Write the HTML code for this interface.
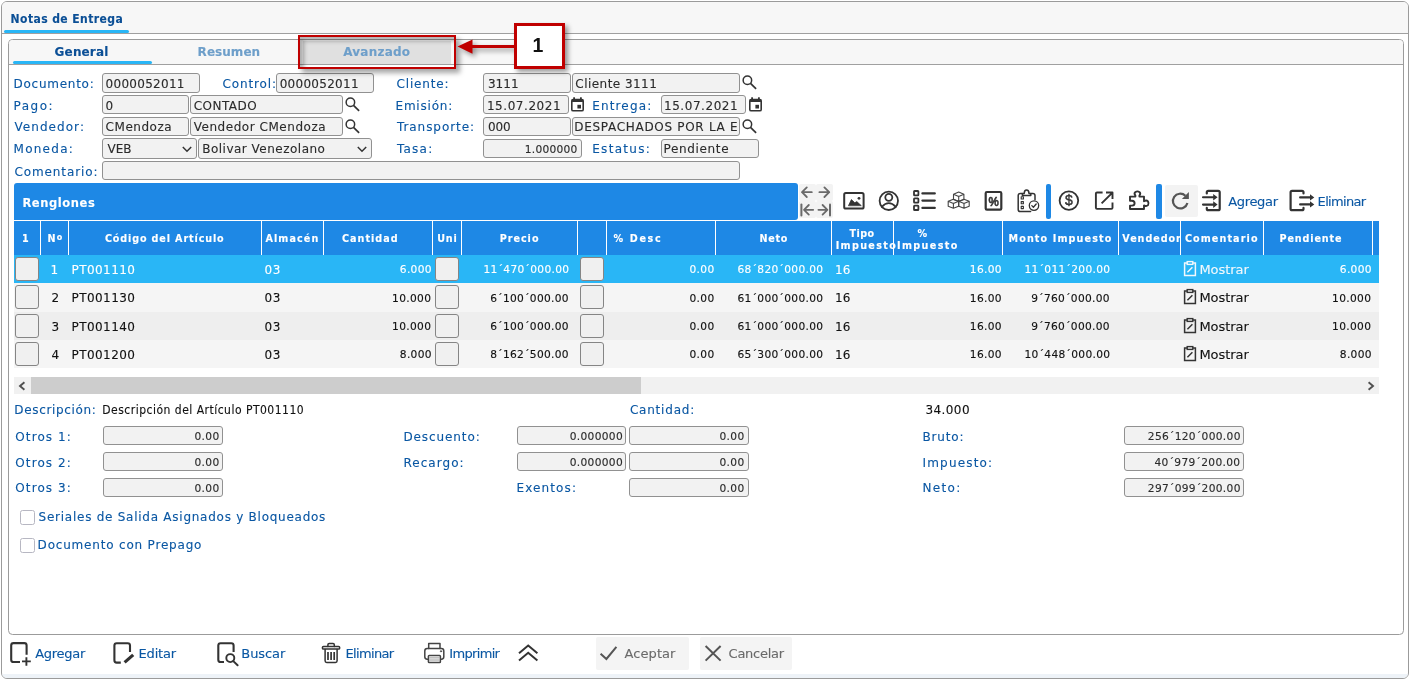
<!DOCTYPE html>
<html lang="es"><head><meta charset="utf-8"><title>Notas de Entrega</title>
<style>
*{box-sizing:border-box}
html,body{margin:0;padding:0}
body{width:1410px;height:680px;position:relative;overflow:hidden;background:#fff;font-family:"DejaVu Sans","Liberation Sans",sans-serif;font-size:12px;color:#222}
div,svg{position:absolute}
.t{white-space:nowrap;-webkit-text-stroke:0.120px currentColor}
.inp{background:#f2f2f2;border:1px solid #919191;border-radius:3px}
.sep{background:#fff;width:1px;top:221px;height:34px}
.btn{background:#f0f0f0;border:1px solid #858585;border-radius:3px}
.row{left:14px;width:1365px}
.clipx{overflow:hidden}
</style></head>
<body>
<div id="app" style="left:0;top:0;width:1410px;height:680px;will-change:transform">
<div style="left:1px;top:1px;width:1408px;height:678px;border:1px solid #9b9b9b;border-radius:6px;background:#fff;overflow:hidden"><div style="left:0;top:0;width:1406px;height:31px;background:#f7f7f7"></div><div style="left:0;top:31px;width:1406px;height:1px;background:#a0a0a0"></div><div style="left:0;top:672px;width:1406px;height:4px;background:#eef3f8"></div></div>
<div class="t" style="top:12px;font-size:12px;line-height:14px;height:14px;color:#0b4f96;font-weight:bold;font-family:'DejaVu Sans Condensed','DejaVu Sans',sans-serif;letter-spacing:0.42px;left:10.6px;">Notas de Entrega</div>
<div style="left:4px;top:30px;width:125px;height:3px;background:#29b6f6;border-radius:2px"></div>
<div style="left:8px;top:39px;width:1396px;height:596px;border:1px solid #9b9b9b;border-radius:4.500px;background:#fff;overflow:hidden"><div style="left:0;top:0;width:1395px;height:24px;background:#f7f7f7"></div><div style="left:294px;top:1px;width:148px;height:23px;background:#e0e0e0"></div><div style="left:0;top:24px;width:1395px;height:1px;background:#a0a0a0"></div></div>
<div class="t" style="top:45px;font-size:12px;line-height:14px;height:14px;color:#0b4f96;font-weight:bold;letter-spacing:0.152px;left:54.6px;">General</div>
<div class="t" style="top:45px;font-size:12px;line-height:14px;height:14px;color:#6e9fca;font-weight:bold;letter-spacing:0.049px;left:197.6px;">Resumen</div>
<div class="t" style="top:45px;font-size:12px;line-height:14px;height:14px;color:#6e9fca;font-weight:bold;letter-spacing:0.229px;left:343.2px;">Avanzado</div>
<div style="left:13px;top:61px;width:139px;height:3px;background:#29b6f6;border-radius:2px"></div>
<div class="t" style="top:76.7px;font-size:12px;line-height:14px;height:14px;color:#0a57a3;letter-spacing:0.743px;left:13.5px;">Documento:</div>
<div class="inp" style="left:102px;top:73px;width:98px;height:20px;"></div>
<div class="t" style="top:76.7px;font-size:12px;line-height:14px;height:14px;color:#2b2b2b;letter-spacing:0.276px;left:105.6px;">0000052011</div>
<div class="t" style="top:76.7px;font-size:12px;line-height:14px;height:14px;color:#0a57a3;letter-spacing:0.86px;left:222.6px;">Control:</div>
<div class="inp" style="left:276px;top:73px;width:98px;height:20px;"></div>
<div class="t" style="top:76.7px;font-size:12px;line-height:14px;height:14px;color:#2b2b2b;letter-spacing:0.276px;left:279.7px;">0000052011</div>
<div class="t" style="top:76.7px;font-size:12px;line-height:14px;height:14px;color:#0a57a3;letter-spacing:0.84px;left:396.5px;">Cliente:</div>
<div class="inp" style="left:483px;top:73px;width:88px;height:20px;"></div>
<div class="t" style="top:76.7px;font-size:12px;line-height:14px;height:14px;color:#2b2b2b;letter-spacing:0.099px;left:487.9px;">3111</div>
<div class="inp" style="left:572px;top:73px;width:168px;height:20px;"></div>
<div class="t" style="top:76.7px;font-size:12px;line-height:14px;height:14px;color:#2b2b2b;letter-spacing:0.46px;left:575.3px;">Cliente 3111</div>
<div class="t" style="top:98.5px;font-size:12px;line-height:14px;height:14px;color:#0a57a3;letter-spacing:1.523px;left:13.5px;">Pago:</div>
<div class="inp" style="left:102px;top:95px;width:87px;height:19px;"></div>
<div class="t" style="top:98.5px;font-size:12px;line-height:14px;height:14px;color:#2b2b2b;left:105.6px;">0</div>
<div class="inp" style="left:190px;top:95px;width:153px;height:19px;"></div>
<div class="t" style="top:98.5px;font-size:12px;line-height:14px;height:14px;color:#2b2b2b;letter-spacing:0.475px;left:193.7px;">CONTADO</div>
<div class="t" style="top:98.5px;font-size:12px;line-height:14px;height:14px;color:#0a57a3;letter-spacing:0.794px;left:395.5px;">Emisión:</div>
<div class="inp" style="left:483px;top:95px;width:86px;height:19px;"></div>
<div class="t" style="top:98.5px;font-size:12px;line-height:14px;height:14px;color:#2b2b2b;letter-spacing:0.559px;left:486.9px;">15.07.2021</div>
<div class="t" style="top:98.5px;font-size:12px;line-height:14px;height:14px;color:#0a57a3;letter-spacing:1.155px;left:592.2px;">Entrega:</div>
<div class="inp" style="left:661px;top:95px;width:85px;height:19px;"></div>
<div class="t" style="top:98.5px;font-size:12px;line-height:14px;height:14px;color:#2b2b2b;letter-spacing:0.548px;left:664px;">15.07.2021</div>
<div class="t" style="top:120px;font-size:12px;line-height:14px;height:14px;color:#0a57a3;letter-spacing:1.057px;left:14.5px;">Vendedor:</div>
<div class="inp" style="left:102px;top:117px;width:87px;height:19px;"></div>
<div class="t" style="top:120px;font-size:12px;line-height:14px;height:14px;color:#2b2b2b;letter-spacing:0.532px;left:105.6px;">CMendoza</div>
<div class="inp" style="left:190px;top:117px;width:153px;height:19px;"></div>
<div class="t" style="top:120px;font-size:12px;line-height:14px;height:14px;color:#2b2b2b;letter-spacing:0.541px;left:193.7px;">Vendedor CMendoza</div>
<div class="t" style="top:120px;font-size:12px;line-height:14px;height:14px;color:#0a57a3;letter-spacing:0.951px;left:396.9px;">Transporte:</div>
<div class="inp" style="left:483px;top:117px;width:88px;height:19px;"></div>
<div class="t" style="top:120px;font-size:12px;line-height:14px;height:14px;color:#2b2b2b;letter-spacing:-0.085px;left:487.9px;">000</div>
<div class="inp" style="left:572px;top:117px;width:168px;height:19px;"></div>
<div class="clipx" style="left:573px;top:118px;width:165px;height:17px">
<div class="t" style="top:2px;font-size:12px;line-height:14px;height:14px;color:#2b2b2b;letter-spacing:0.697px;left:1.3px;">DESPACHADOS POR LA EMPRESA</div>
</div>
<div class="t" style="top:141.8px;font-size:12px;line-height:14px;height:14px;color:#0a57a3;letter-spacing:1.274px;left:13.5px;">Moneda:</div>
<div class="inp" style="left:102px;top:138px;width:95px;height:21px;"></div>
<div class="t" style="top:141.8px;font-size:12px;line-height:14px;height:14px;color:#2b2b2b;letter-spacing:0.054px;left:107.4px;">VEB</div>
<div class="inp" style="left:198px;top:138px;width:174px;height:21px;"></div>
<div class="t" style="top:141.8px;font-size:12px;line-height:14px;height:14px;color:#2b2b2b;letter-spacing:0.493px;left:202.2px;">Bolivar Venezolano</div>
<div class="t" style="top:141.8px;font-size:12px;line-height:14px;height:14px;color:#0a57a3;letter-spacing:1.249px;left:396.9px;">Tasa:</div>
<div class="inp" style="left:483px;top:139px;width:99px;height:19px;"></div>
<div class="t" style="top:143.8px;font-size:9.6px;line-height:11px;height:11px;color:#2b2b2b;letter-spacing:0.208px;right:832.25px;transform:scaleX(1.11);transform-origin:right center;">1.000000</div>
<div class="t" style="top:141.8px;font-size:12px;line-height:14px;height:14px;color:#0a57a3;letter-spacing:1.306px;left:592.2px;">Estatus:</div>
<div class="inp" style="left:661px;top:139px;width:98px;height:19px;"></div>
<div class="t" style="top:141.8px;font-size:12px;line-height:14px;height:14px;color:#2b2b2b;letter-spacing:0.645px;left:663.6px;">Pendiente</div>
<div class="t" style="top:164.6px;font-size:12px;line-height:14px;height:14px;color:#0a57a3;letter-spacing:0.893px;left:14.5px;">Comentario:</div>
<div class="inp" style="left:102px;top:161px;width:638px;height:19px;"></div>
<svg style="left:181.5px;top:146px" width="10" height="7" viewBox="0 0 10 7"><path d="M0.8 1 L5 5.200 L9.200 1" fill="none" stroke="#333" stroke-width="1.500"/></svg>
<svg style="left:356.5px;top:146px" width="10" height="7" viewBox="0 0 10 7"><path d="M0.8 1 L5 5.200 L9.200 1" fill="none" stroke="#333" stroke-width="1.500"/></svg>
<svg style="left:345px;top:97px" width="16" height="16" viewBox="0 0 16 16"><circle cx="5.400" cy="5.200" r="4.250" fill="none" stroke="#333" stroke-width="1.500"/><path d="M8.500 8.300 L14.100 13.800" stroke="#333" stroke-width="1.700" fill="none"/></svg>
<svg style="left:345px;top:119px" width="16" height="16" viewBox="0 0 16 16"><circle cx="5.400" cy="5.200" r="4.250" fill="none" stroke="#333" stroke-width="1.500"/><path d="M8.500 8.300 L14.100 13.800" stroke="#333" stroke-width="1.700" fill="none"/></svg>
<svg style="left:742px;top:75px" width="16" height="16" viewBox="0 0 16 16"><circle cx="5.400" cy="5.200" r="4.250" fill="none" stroke="#333" stroke-width="1.500"/><path d="M8.500 8.300 L14.100 13.800" stroke="#333" stroke-width="1.700" fill="none"/></svg>
<svg style="left:742px;top:119px" width="16" height="16" viewBox="0 0 16 16"><circle cx="5.400" cy="5.200" r="4.250" fill="none" stroke="#333" stroke-width="1.500"/><path d="M8.500 8.300 L14.100 13.800" stroke="#333" stroke-width="1.700" fill="none"/></svg>
<svg style="left:571px;top:97px" width="13" height="15" viewBox="0 0 13 15"><rect x="0.800" y="2.600" width="11.400" height="11.200" rx="1.400" fill="none" stroke="#333" stroke-width="1.600"/><rect x="0.800" y="1.900" width="11.400" height="3.100" rx="0.800" fill="#333"/><rect x="2.200" y="0.300" width="1.800" height="2.400" fill="#333"/><rect x="9" y="0.300" width="1.800" height="2.400" fill="#333"/><rect x="6.400" y="7.800" width="3.600" height="3.700" fill="#333"/></svg>
<svg style="left:748.5px;top:97px" width="13" height="15" viewBox="0 0 13 15"><rect x="0.800" y="2.600" width="11.400" height="11.200" rx="1.400" fill="none" stroke="#333" stroke-width="1.600"/><rect x="0.800" y="1.900" width="11.400" height="3.100" rx="0.800" fill="#333"/><rect x="2.200" y="0.300" width="1.800" height="2.400" fill="#333"/><rect x="9" y="0.300" width="1.800" height="2.400" fill="#333"/><rect x="6.400" y="7.800" width="3.600" height="3.700" fill="#333"/></svg>
<div style="left:14px;top:183px;width:784px;height:37px;background:#1e88e5;border-radius:3px 3px 3px 0"></div>
<div class="t" style="top:195.8px;font-size:11.5px;line-height:14px;height:14px;color:#fff;font-weight:bold;letter-spacing:0.587px;left:22.4px;">Renglones</div>
<div style="left:14px;top:221px;width:1365px;height:34px;background:#1e88e5"></div>
<div class="sep" style="left:40px"></div>
<div class="sep" style="left:68px"></div>
<div class="sep" style="left:261px"></div>
<div class="sep" style="left:323px"></div>
<div class="sep" style="left:432px"></div>
<div class="sep" style="left:461px"></div>
<div class="sep" style="left:577px"></div>
<div class="sep" style="left:606px"></div>
<div class="sep" style="left:715px"></div>
<div class="sep" style="left:831px"></div>
<div class="sep" style="left:893px"></div>
<div class="sep" style="left:1002px"></div>
<div class="sep" style="left:1118px"></div>
<div class="sep" style="left:1180px"></div>
<div class="sep" style="left:1263px"></div>
<div class="sep" style="left:1372px"></div>
<div class="t" style="top:233px;font-size:9.6px;line-height:11px;height:11px;color:#fff;font-weight:bold;letter-spacing:0.9px;left:22px;">1</div>
<div class="t" style="top:233px;font-size:9.6px;line-height:11px;height:11px;color:#fff;font-weight:bold;left:47.5px;">N<span style="font-size:8px;position:relative;top:-2.300px;margin-left:1.200px">o</span></div>
<div class="t" style="top:233px;font-size:9.6px;line-height:11px;height:11px;color:#fff;font-weight:bold;letter-spacing:0.876px;left:104.9px;">Código del Artículo</div>
<div class="t" style="top:233px;font-size:9.6px;line-height:11px;height:11px;color:#fff;font-weight:bold;letter-spacing:1.12px;left:265.4px;">Almacén</div>
<div class="t" style="top:233px;font-size:9.6px;line-height:11px;height:11px;color:#fff;font-weight:bold;letter-spacing:1.02px;left:342px;">Cantidad</div>
<div class="t" style="top:233px;font-size:9.6px;line-height:11px;height:11px;color:#fff;font-weight:bold;letter-spacing:0.74px;left:437.3px;">Uni</div>
<div class="t" style="top:233px;font-size:9.6px;line-height:11px;height:11px;color:#fff;font-weight:bold;letter-spacing:0.991px;left:499.7px;">Precio</div>
<div class="t" style="top:233px;font-size:9.6px;line-height:11px;height:11px;color:#fff;font-weight:bold;letter-spacing:1.693px;left:613.4px;">% Desc</div>
<div class="t" style="top:233px;font-size:9.6px;line-height:11px;height:11px;color:#fff;font-weight:bold;letter-spacing:0.693px;left:759.5px;">Neto</div>
<div class="t" style="top:228px;font-size:9.6px;line-height:11px;height:11px;color:#fff;font-weight:bold;letter-spacing:0.5px;left:849.4px;">Tipo</div>
<div class="t" style="top:240px;font-size:9.6px;line-height:11px;height:11px;color:#fff;font-weight:bold;letter-spacing:1.348px;left:835.7px;">Impuesto</div>
<div class="t" style="top:228px;font-size:9.6px;line-height:11px;height:11px;color:#fff;font-weight:bold;left:917.4px;">%</div>
<div class="t" style="top:240px;font-size:9.6px;line-height:11px;height:11px;color:#fff;font-weight:bold;letter-spacing:1.39px;left:897px;">Impuesto</div>
<div class="t" style="top:233px;font-size:9.6px;line-height:11px;height:11px;color:#fff;font-weight:bold;letter-spacing:1.134px;left:1008.5px;">Monto Impuesto</div>
<div class="clipx" style="left:1119px;top:221px;width:62px;height:34px">
<div class="t" style="top:12px;font-size:9.6px;line-height:11px;height:11px;color:#fff;font-weight:bold;letter-spacing:0.95px;left:3.3px;">Vendedor</div>
</div>
<div class="t" style="top:233px;font-size:9.6px;line-height:11px;height:11px;color:#fff;font-weight:bold;letter-spacing:1.106px;left:1184.9px;">Comentario</div>
<div class="t" style="top:233px;font-size:9.6px;line-height:11px;height:11px;color:#fff;font-weight:bold;letter-spacing:0.857px;left:1279.6px;">Pendiente</div>
<div class="row" style="top:255px;height:28px;background:#29b6f6"></div>
<div class="btn" style="left:15px;top:257px;width:24px;height:24px;"></div>
<div class="btn" style="left:435px;top:257px;width:24px;height:24px;"></div>
<div class="btn" style="left:580px;top:257px;width:24px;height:24px;"></div>
<div class="t" style="top:262.6px;font-size:12px;line-height:14px;height:14px;color:#fff;left:50.5px;">1</div>
<div class="t" style="top:262.6px;font-size:12px;line-height:14px;height:14px;color:#fff;letter-spacing:0.437px;left:71.5px;">PT001110</div>
<div class="t" style="top:262.6px;font-size:12px;line-height:14px;height:14px;color:#fff;letter-spacing:0.565px;left:264.5px;">03</div>
<div class="t" style="top:264.2px;font-size:9.6px;line-height:11px;height:11px;color:#fff;letter-spacing:0.281px;right:978.57px;transform:scaleX(1.11);transform-origin:right center;">6.000</div>
<div class="t" style="top:264.2px;font-size:9.6px;line-height:11px;height:11px;color:#fff;letter-spacing:0.281px;right:840.77px;transform:scaleX(1.11);transform-origin:right center;">11´470´000.00</div>
<div class="t" style="top:264.2px;font-size:9.6px;line-height:11px;height:11px;color:#fff;letter-spacing:0.281px;right:695.87px;transform:scaleX(1.11);transform-origin:right center;">0.00</div>
<div class="t" style="top:264.2px;font-size:9.6px;line-height:11px;height:11px;color:#fff;letter-spacing:0.281px;right:586.97px;transform:scaleX(1.11);transform-origin:right center;">68´820´000.00</div>
<div class="t" style="top:262.6px;font-size:12px;line-height:14px;height:14px;color:#fff;letter-spacing:0.165px;left:834.9px;">16</div>
<div class="t" style="top:264.2px;font-size:9.6px;line-height:11px;height:11px;color:#fff;letter-spacing:0.281px;right:408.57px;transform:scaleX(1.11);transform-origin:right center;">16.00</div>
<div class="t" style="top:264.2px;font-size:9.6px;line-height:11px;height:11px;color:#fff;letter-spacing:0.281px;right:299.67px;transform:scaleX(1.11);transform-origin:right center;">11´011´200.00</div>
<svg style="left:1182.5px;top:260px" width="14" height="17" viewBox="0 0 14 17"><path d="M4.200 3 H1.600 V15.600 H12.400 V3 H9.800" fill="none" stroke="#f2f8fc" stroke-width="1.500"/><rect x="4.200" y="1.600" width="5.600" height="2.800" fill="none" stroke="#f2f8fc" stroke-width="1.400"/><path d="M4.400 12.200 L9.400 7.200" stroke="#f2f8fc" stroke-width="1.500"/></svg>
<div class="t" style="top:261.9px;font-size:13px;line-height:15px;height:15px;color:#f2f8fc;letter-spacing:-0.059px;left:1199.4px;">Mostrar</div>
<div class="t" style="top:264.2px;font-size:9.6px;line-height:11px;height:11px;color:#fff;letter-spacing:0.281px;right:38.57px;transform:scaleX(1.11);transform-origin:right center;">6.000</div>
<div class="row" style="top:283px;height:28.5px;background:#f5f5f5"></div>
<div class="btn" style="left:15px;top:285px;width:24px;height:24px;"></div>
<div class="btn" style="left:435px;top:285px;width:24px;height:24px;"></div>
<div class="btn" style="left:580px;top:285px;width:24px;height:24px;"></div>
<div class="t" style="top:291px;font-size:12px;line-height:14px;height:14px;color:#111;left:51.5px;">2</div>
<div class="t" style="top:291px;font-size:12px;line-height:14px;height:14px;color:#111;letter-spacing:0.437px;left:71.5px;">PT001130</div>
<div class="t" style="top:291px;font-size:12px;line-height:14px;height:14px;color:#111;letter-spacing:0.565px;left:264.5px;">03</div>
<div class="t" style="top:292.6px;font-size:9.6px;line-height:11px;height:11px;color:#111;letter-spacing:0.281px;right:978.57px;transform:scaleX(1.11);transform-origin:right center;">10.000</div>
<div class="t" style="top:292.6px;font-size:9.6px;line-height:11px;height:11px;color:#111;letter-spacing:0.281px;right:840.77px;transform:scaleX(1.11);transform-origin:right center;">6´100´000.00</div>
<div class="t" style="top:292.6px;font-size:9.6px;line-height:11px;height:11px;color:#111;letter-spacing:0.281px;right:695.87px;transform:scaleX(1.11);transform-origin:right center;">0.00</div>
<div class="t" style="top:292.6px;font-size:9.6px;line-height:11px;height:11px;color:#111;letter-spacing:0.281px;right:586.97px;transform:scaleX(1.11);transform-origin:right center;">61´000´000.00</div>
<div class="t" style="top:291px;font-size:12px;line-height:14px;height:14px;color:#111;letter-spacing:0.165px;left:834.9px;">16</div>
<div class="t" style="top:292.6px;font-size:9.6px;line-height:11px;height:11px;color:#111;letter-spacing:0.281px;right:408.57px;transform:scaleX(1.11);transform-origin:right center;">16.00</div>
<div class="t" style="top:292.6px;font-size:9.6px;line-height:11px;height:11px;color:#111;letter-spacing:0.281px;right:299.67px;transform:scaleX(1.11);transform-origin:right center;">9´760´000.00</div>
<svg style="left:1182.5px;top:288px" width="14" height="17" viewBox="0 0 14 17"><path d="M4.200 3 H1.600 V15.600 H12.400 V3 H9.800" fill="none" stroke="#333" stroke-width="1.500"/><rect x="4.200" y="1.600" width="5.600" height="2.800" fill="none" stroke="#333" stroke-width="1.400"/><path d="M4.400 12.200 L9.400 7.200" stroke="#333" stroke-width="1.500"/></svg>
<div class="t" style="top:290.3px;font-size:13px;line-height:15px;height:15px;color:#111;letter-spacing:-0.059px;left:1199.4px;">Mostrar</div>
<div class="t" style="top:292.6px;font-size:9.6px;line-height:11px;height:11px;color:#111;letter-spacing:0.281px;right:38.57px;transform:scaleX(1.11);transform-origin:right center;">10.000</div>
<div class="row" style="top:311.5px;height:28.0px;background:#eeeeee"></div>
<div class="btn" style="left:15px;top:314px;width:24px;height:24px;"></div>
<div class="btn" style="left:435px;top:314px;width:24px;height:24px;"></div>
<div class="btn" style="left:580px;top:314px;width:24px;height:24px;"></div>
<div class="t" style="top:319.7px;font-size:12px;line-height:14px;height:14px;color:#111;left:51.5px;">3</div>
<div class="t" style="top:319.7px;font-size:12px;line-height:14px;height:14px;color:#111;letter-spacing:0.437px;left:71.5px;">PT001140</div>
<div class="t" style="top:319.7px;font-size:12px;line-height:14px;height:14px;color:#111;letter-spacing:0.565px;left:264.5px;">03</div>
<div class="t" style="top:321.3px;font-size:9.6px;line-height:11px;height:11px;color:#111;letter-spacing:0.281px;right:978.57px;transform:scaleX(1.11);transform-origin:right center;">10.000</div>
<div class="t" style="top:321.3px;font-size:9.6px;line-height:11px;height:11px;color:#111;letter-spacing:0.281px;right:840.77px;transform:scaleX(1.11);transform-origin:right center;">6´100´000.00</div>
<div class="t" style="top:321.3px;font-size:9.6px;line-height:11px;height:11px;color:#111;letter-spacing:0.281px;right:695.87px;transform:scaleX(1.11);transform-origin:right center;">0.00</div>
<div class="t" style="top:321.3px;font-size:9.6px;line-height:11px;height:11px;color:#111;letter-spacing:0.281px;right:586.97px;transform:scaleX(1.11);transform-origin:right center;">61´000´000.00</div>
<div class="t" style="top:319.7px;font-size:12px;line-height:14px;height:14px;color:#111;letter-spacing:0.165px;left:834.9px;">16</div>
<div class="t" style="top:321.3px;font-size:9.6px;line-height:11px;height:11px;color:#111;letter-spacing:0.281px;right:408.57px;transform:scaleX(1.11);transform-origin:right center;">16.00</div>
<div class="t" style="top:321.3px;font-size:9.6px;line-height:11px;height:11px;color:#111;letter-spacing:0.281px;right:299.67px;transform:scaleX(1.11);transform-origin:right center;">9´760´000.00</div>
<svg style="left:1182.5px;top:317px" width="14" height="17" viewBox="0 0 14 17"><path d="M4.200 3 H1.600 V15.600 H12.400 V3 H9.800" fill="none" stroke="#333" stroke-width="1.500"/><rect x="4.200" y="1.600" width="5.600" height="2.800" fill="none" stroke="#333" stroke-width="1.400"/><path d="M4.400 12.200 L9.400 7.200" stroke="#333" stroke-width="1.500"/></svg>
<div class="t" style="top:319.0px;font-size:13px;line-height:15px;height:15px;color:#111;letter-spacing:-0.059px;left:1199.4px;">Mostrar</div>
<div class="t" style="top:321.3px;font-size:9.6px;line-height:11px;height:11px;color:#111;letter-spacing:0.281px;right:38.57px;transform:scaleX(1.11);transform-origin:right center;">10.000</div>
<div class="row" style="top:339.5px;height:28.19999999999999px;background:#f5f5f5"></div>
<div class="btn" style="left:15px;top:342px;width:24px;height:24px;"></div>
<div class="btn" style="left:435px;top:342px;width:24px;height:24px;"></div>
<div class="btn" style="left:580px;top:342px;width:24px;height:24px;"></div>
<div class="t" style="top:347.8px;font-size:12px;line-height:14px;height:14px;color:#111;left:51.5px;">4</div>
<div class="t" style="top:347.8px;font-size:12px;line-height:14px;height:14px;color:#111;letter-spacing:0.437px;left:71.5px;">PT001200</div>
<div class="t" style="top:347.8px;font-size:12px;line-height:14px;height:14px;color:#111;letter-spacing:0.565px;left:264.5px;">03</div>
<div class="t" style="top:349.4px;font-size:9.6px;line-height:11px;height:11px;color:#111;letter-spacing:0.281px;right:978.57px;transform:scaleX(1.11);transform-origin:right center;">8.000</div>
<div class="t" style="top:349.4px;font-size:9.6px;line-height:11px;height:11px;color:#111;letter-spacing:0.281px;right:840.77px;transform:scaleX(1.11);transform-origin:right center;">8´162´500.00</div>
<div class="t" style="top:349.4px;font-size:9.6px;line-height:11px;height:11px;color:#111;letter-spacing:0.281px;right:695.87px;transform:scaleX(1.11);transform-origin:right center;">0.00</div>
<div class="t" style="top:349.4px;font-size:9.6px;line-height:11px;height:11px;color:#111;letter-spacing:0.281px;right:586.97px;transform:scaleX(1.11);transform-origin:right center;">65´300´000.00</div>
<div class="t" style="top:347.8px;font-size:12px;line-height:14px;height:14px;color:#111;letter-spacing:0.165px;left:834.9px;">16</div>
<div class="t" style="top:349.4px;font-size:9.6px;line-height:11px;height:11px;color:#111;letter-spacing:0.281px;right:408.57px;transform:scaleX(1.11);transform-origin:right center;">16.00</div>
<div class="t" style="top:349.4px;font-size:9.6px;line-height:11px;height:11px;color:#111;letter-spacing:0.281px;right:299.67px;transform:scaleX(1.11);transform-origin:right center;">10´448´000.00</div>
<svg style="left:1182.5px;top:345px" width="14" height="17" viewBox="0 0 14 17"><path d="M4.200 3 H1.600 V15.600 H12.400 V3 H9.800" fill="none" stroke="#333" stroke-width="1.500"/><rect x="4.200" y="1.600" width="5.600" height="2.800" fill="none" stroke="#333" stroke-width="1.400"/><path d="M4.400 12.200 L9.400 7.200" stroke="#333" stroke-width="1.500"/></svg>
<div class="t" style="top:347.1px;font-size:13px;line-height:15px;height:15px;color:#111;letter-spacing:-0.059px;left:1199.4px;">Mostrar</div>
<div class="t" style="top:349.4px;font-size:9.6px;line-height:11px;height:11px;color:#111;letter-spacing:0.281px;right:38.57px;transform:scaleX(1.11);transform-origin:right center;">8.000</div>
<div style="left:14px;top:377px;width:1365px;height:17px;background:#f1f1f1"></div>
<div style="left:31px;top:377px;width:610px;height:17px;background:#cdcdcd"></div>
<svg style="left:18px;top:381px" width="8" height="10" viewBox="0 0 8 10"><path d="M6.400 1.200 L2 5 L6.400 8.800" fill="none" stroke="#505050" stroke-width="1.900"/></svg>
<svg style="left:1367px;top:381px" width="8" height="10" viewBox="0 0 8 10"><path d="M1.600 1.200 L6 5 L1.600 8.800" fill="none" stroke="#505050" stroke-width="1.900"/></svg>
<div class="t" style="top:402.7px;font-size:12px;line-height:14px;height:14px;color:#0a57a3;letter-spacing:0.66px;left:14.3px;">Descripción:</div>
<div class="t" style="top:402.7px;font-size:12px;line-height:14px;height:14px;color:#111;font-family:'DejaVu Sans Condensed','DejaVu Sans',sans-serif;letter-spacing:0.489px;left:102.3px;">Descripción del Artículo PT001110</div>
<div class="t" style="top:402.9px;font-size:12px;line-height:14px;height:14px;color:#0a57a3;letter-spacing:0.792px;left:629.9px;">Cantidad:</div>
<div class="t" style="top:402.8px;font-size:12px;line-height:14px;height:14px;color:#111;letter-spacing:0.409px;left:925.5px;">34.000</div>
<div class="t" style="top:429.8px;font-size:12px;line-height:14px;height:14px;color:#0a57a3;letter-spacing:1.091px;left:15.3px;">Otros 1:</div>
<div class="inp" style="left:103px;top:426px;width:120px;height:19px;"></div>
<div class="t" style="top:431px;font-size:9.6px;line-height:11px;height:11px;color:#2b2b2b;letter-spacing:0.281px;right:1190.37px;transform:scaleX(1.11);transform-origin:right center;">0.00</div>
<div class="t" style="top:455.6px;font-size:12px;line-height:14px;height:14px;color:#0a57a3;letter-spacing:1.091px;left:15.3px;">Otros 2:</div>
<div class="inp" style="left:103px;top:452px;width:120px;height:19px;"></div>
<div class="t" style="top:457px;font-size:9.6px;line-height:11px;height:11px;color:#2b2b2b;letter-spacing:0.281px;right:1190.37px;transform:scaleX(1.11);transform-origin:right center;">0.00</div>
<div class="t" style="top:481.4px;font-size:12px;line-height:14px;height:14px;color:#0a57a3;letter-spacing:1.091px;left:15.3px;">Otros 3:</div>
<div class="inp" style="left:103px;top:478px;width:120px;height:19px;"></div>
<div class="t" style="top:483px;font-size:9.6px;line-height:11px;height:11px;color:#2b2b2b;letter-spacing:0.281px;right:1190.37px;transform:scaleX(1.11);transform-origin:right center;">0.00</div>
<div class="t" style="top:429.8px;font-size:12px;line-height:14px;height:14px;color:#0a57a3;letter-spacing:0.91px;left:403.4px;">Descuento:</div>
<div class="inp" style="left:517px;top:426px;width:109px;height:19px;"></div>
<div class="t" style="top:431px;font-size:9.6px;line-height:11px;height:11px;color:#2b2b2b;letter-spacing:0.281px;right:787.37px;transform:scaleX(1.11);transform-origin:right center;">0.000000</div>
<div class="inp" style="left:629px;top:426px;width:120px;height:19px;"></div>
<div class="t" style="top:431px;font-size:9.6px;line-height:11px;height:11px;color:#2b2b2b;letter-spacing:0.281px;right:665.37px;transform:scaleX(1.11);transform-origin:right center;">0.00</div>
<div class="t" style="top:455.6px;font-size:12px;line-height:14px;height:14px;color:#0a57a3;letter-spacing:1.055px;left:403.4px;">Recargo:</div>
<div class="inp" style="left:517px;top:452px;width:109px;height:19px;"></div>
<div class="t" style="top:457px;font-size:9.6px;line-height:11px;height:11px;color:#2b2b2b;letter-spacing:0.281px;right:787.37px;transform:scaleX(1.11);transform-origin:right center;">0.000000</div>
<div class="inp" style="left:629px;top:452px;width:120px;height:19px;"></div>
<div class="t" style="top:457px;font-size:9.6px;line-height:11px;height:11px;color:#2b2b2b;letter-spacing:0.281px;right:665.37px;transform:scaleX(1.11);transform-origin:right center;">0.00</div>
<div class="t" style="top:481.4px;font-size:12px;line-height:14px;height:14px;color:#0a57a3;letter-spacing:1.114px;left:516.5px;">Exentos:</div>
<div class="inp" style="left:629px;top:478px;width:120px;height:19px;"></div>
<div class="t" style="top:483px;font-size:9.6px;line-height:11px;height:11px;color:#2b2b2b;letter-spacing:0.281px;right:665.37px;transform:scaleX(1.11);transform-origin:right center;">0.00</div>
<div class="t" style="top:429.8px;font-size:12px;line-height:14px;height:14px;color:#0a57a3;letter-spacing:0.836px;left:922.5px;">Bruto:</div>
<div class="inp" style="left:1124px;top:426px;width:120px;height:19px;"></div>
<div class="t" style="top:431px;font-size:9.6px;line-height:11px;height:11px;color:#2b2b2b;letter-spacing:0.281px;right:169.27px;transform:scaleX(1.11);transform-origin:right center;">256´120´000.00</div>
<div class="t" style="top:455.6px;font-size:12px;line-height:14px;height:14px;color:#0a57a3;letter-spacing:1.183px;left:922.5px;">Impuesto:</div>
<div class="inp" style="left:1124px;top:452px;width:120px;height:19px;"></div>
<div class="t" style="top:457px;font-size:9.6px;line-height:11px;height:11px;color:#2b2b2b;letter-spacing:0.281px;right:169.27px;transform:scaleX(1.11);transform-origin:right center;">40´979´200.00</div>
<div class="t" style="top:481.4px;font-size:12px;line-height:14px;height:14px;color:#0a57a3;letter-spacing:1.323px;left:922.5px;">Neto:</div>
<div class="inp" style="left:1124px;top:478px;width:120px;height:19px;"></div>
<div class="t" style="top:483px;font-size:9.6px;line-height:11px;height:11px;color:#2b2b2b;letter-spacing:0.281px;right:169.27px;transform:scaleX(1.11);transform-origin:right center;">297´099´200.00</div>
<div style="left:20.200px;top:510.2px;width:14.400px;height:14.400px;border:1.700px solid #b7b7c2;border-radius:2.500px;background:#fff"></div>
<div class="t" style="top:509.7px;font-size:12px;line-height:14px;height:14px;color:#0a57a3;letter-spacing:0.743px;left:38.6px;">Seriales de Salida Asignados y Bloqueados</div>
<div style="left:20.200px;top:538.4000000000001px;width:14.400px;height:14.400px;border:1.700px solid #b7b7c2;border-radius:2.500px;background:#fff"></div>
<div class="t" style="top:537.9px;font-size:12px;line-height:14px;height:14px;color:#0a57a3;letter-spacing:0.808px;left:37.6px;">Documento con Prepago</div>
<div class="t" style="top:645.7px;font-size:13px;line-height:15px;height:15px;color:#0a57a3;letter-spacing:-0.27px;left:35.2px;">Agregar</div>
<div class="t" style="top:645.7px;font-size:13px;line-height:15px;height:15px;color:#0a57a3;letter-spacing:-0.168px;left:138.5px;">Editar</div>
<div class="t" style="top:645.7px;font-size:13px;line-height:15px;height:15px;color:#0a57a3;letter-spacing:-0.069px;left:241.3px;">Buscar</div>
<div class="t" style="top:645.7px;font-size:13px;line-height:15px;height:15px;color:#0a57a3;letter-spacing:-0.66px;left:345.5px;">Eliminar</div>
<div class="t" style="top:645.7px;font-size:13px;line-height:15px;height:15px;color:#0a57a3;letter-spacing:-0.669px;left:449.3px;">Imprimir</div>
<div style="left:596px;top:637px;width:93px;height:33px;background:#f4f4f4;border-radius:2px"></div>
<div style="left:700px;top:637px;width:92px;height:33px;background:#f4f4f4;border-radius:2px"></div>
<div class="t" style="top:645.7px;font-size:13px;line-height:15px;height:15px;color:#6a6a6a;letter-spacing:0.062px;left:624.6px;">Aceptar</div>
<div class="t" style="top:645.7px;font-size:13px;line-height:15px;height:15px;color:#6a6a6a;letter-spacing:-0.258px;left:728.6px;">Cancelar</div>
<div class="t" style="top:194px;font-size:13px;line-height:15px;height:15px;color:#0a57a3;letter-spacing:-0.32px;left:1228.2px;">Agregar</div>
<div class="t" style="top:194px;font-size:13px;line-height:15px;height:15px;color:#0a57a3;letter-spacing:-0.674px;left:1317.6px;">Eliminar</div>
<!-- toolbar icon backgrounds -->
<div style="left:799px;top:184px;width:17px;height:17px;background:#f3f3f3;border-radius:2px"></div>
<div style="left:816px;top:184px;width:17px;height:17px;background:#f3f3f3;border-radius:2px"></div>
<div style="left:799px;top:201px;width:17px;height:17px;background:#f3f3f3;border-radius:2px"></div>
<div style="left:816px;top:201px;width:17px;height:17px;background:#f3f3f3;border-radius:2px"></div>
<div style="left:1165px;top:185px;width:33px;height:32px;background:#f3f3f3;border-radius:2px"></div>
<div style="left:1046px;top:184px;width:5px;height:35px;background:#1e88e5;border-radius:2px"></div>
<div style="left:1156px;top:184px;width:6px;height:35px;background:#1e88e5;border-radius:2px"></div>
<svg style="left:0;top:0" width="1410" height="680" viewBox="0 0 1410 680" fill="none" stroke-linecap="round" stroke-linejoin="round">
 <!-- move arrows -->
 <g stroke="#6a6a6a" stroke-width="1.800">
  <path d="M811.800 192.200H802M806.800 187.400L802 192.200L806.800 197"/>
  <path d="M819.400 192.200H829.200M824.400 187.400L829.200 192.200L824.400 197"/>
  <path d="M801.400 204.400V215.400" stroke-width="2"/><path d="M813.200 209.800H804M808.800 205L804 209.800L808.800 214.600"/>
  <path d="M830 204.400V215.400" stroke-width="2"/><path d="M818.400 209.800H827.400M822.600 205L827.400 209.800L822.600 214.600"/>
 </g>
 <!-- image -->
 <rect x="844.2" y="193.1" width="19.4" height="15.4" rx="1.6" stroke="#333" stroke-width="2"/>
 <path d="M848.6 205.4L851.4 199.6L854.8 202.8L856.8 201.6L861 205.4Z" fill="#333" stroke="#333" stroke-width="0.8"/>
 <circle cx="859" cy="198.3" r="1.4" fill="#333"/>
 <!-- person -->
 <g stroke="#333" stroke-width="1.800">
  <circle cx="888.800" cy="200.800" r="9.200"/>
  <circle cx="888.800" cy="197.300" r="3.500"/>
  <path d="M881.800 206.800Q888.800 199.600 895.800 206.800"/>
 </g>
 <!-- list -->
 <g stroke="#333" stroke-width="1.800">
  <rect x="914" y="191" width="4.400" height="4.400" rx="0.600"/>
  <rect x="914" y="198.300" width="4.400" height="4.400" rx="0.600"/>
  <rect x="914" y="205.600" width="4.400" height="4.400" rx="0.600"/>
  <path d="M922.400 193.400H934.800M922.400 200.600H934.800M922.400 207.900H934.800" stroke-width="2.200"/>
 </g>
 <!-- cubes -->
 <g stroke="#444" stroke-width="1.100">
  <path d="M958.700 192L963.900 194.200V199.400L958.700 201.600L953.500 199.400V194.200ZM953.500 194.200L958.700 196.400L963.900 194.200M958.700 196.400V201.600"/>
  <path d="M953.400 199.200L958.600 201.300V206.300L953.400 208.300L948.200 206.300V201.300ZM948.200 201.300L953.400 203.400L958.600 201.300M953.400 203.400V208.300"/>
  <path d="M964 199.200L969.200 201.300V206.300L964 208.300L958.800 206.300V201.300ZM958.800 201.300L964 203.400L969.200 201.300M964 203.400V208.300"/>
 </g>
 <!-- percent doc -->
 <rect x="985.700" y="192" width="15.600" height="17.700" rx="1.200" stroke="#333" stroke-width="2.200"/>
 <!-- clipboard check -->
 <g stroke="#333" stroke-width="1.5">
  <path d="M1022 193.4H1020.4Q1018.2 193.4 1018.2 195.6V209.4Q1018.2 211.6 1020.4 211.6H1030.6M1031 193.4H1032.8Q1035 193.4 1035 195.6V199.8"/>
  <path d="M1022.4 195.4V193.6H1024.2Q1024.2 190 1026.6 190Q1029 190 1029 193.6H1030.8V195.4Z"/>
  <rect x="1021.2" y="196.8" width="2.2" height="2.2" stroke-width="1.1"/>
  <rect x="1021.2" y="201.6" width="2.2" height="2.2" stroke-width="1.1"/>
  <rect x="1021.2" y="206.4" width="2.2" height="2.2" stroke-width="1.1"/>
  <circle cx="1034" cy="205.6" r="4.7" fill="#fff" stroke-width="1.3"/>
  <path d="M1031.8 205.6L1033.4 207.2L1036.2 204" stroke-width="1.3"/>
 </g>
 <!-- dollar -->
 <circle cx="1068.900" cy="200.600" r="9.300" stroke="#333" stroke-width="1.800"/>
 <!-- external link -->
 <g stroke="#333" stroke-width="1.900" stroke-linecap="butt" stroke-linejoin="round">
  <path d="M1102.600 192.500H1097Q1095.900 192.500 1095.900 193.600V207.800Q1095.900 208.900 1097 208.900H1111.400Q1112.500 208.900 1112.500 207.800V202.400"/>
  <path d="M1101.600 203.400L1112.200 192.800M1106 192.500H1112.500V199"/>
 </g>
 <!-- puzzle -->
 <path d="M1130 196.6H1135.4V195.6Q1133.8 193.6 1135.2 192.2Q1137.4 190.6 1139.6 192.2Q1141 193.6 1139.4 195.6V196.6H1144V201.2Q1146.4 199.6 1148 201.4Q1149.200 203.4 1148 205.2Q1146.4 206.800 1144 205.400V209H1130V205.6H1132Q1134.6 205.4 1134.6 203.200Q1134.6 201 1132 200.800H1130Z" stroke="#333" stroke-width="1.900"/>
 <!-- refresh -->
 <path d="M1185.400 195.800A7.350 7.350 0 1 0 1187.400 202.900" stroke="#555" stroke-width="2.200" stroke-linecap="butt"/>
 <path d="M1188.900 192V198.900H1181.900Z" fill="#555"/>
 <!-- agregar (toolbar) -->
 <g stroke="#333" stroke-width="2.200" stroke-linecap="round">
  <path d="M1206.800 193.500V192.300Q1206.800 190.800 1208.300 190.800H1218.200Q1219.700 190.800 1219.700 192.300V208.700Q1219.700 210.200 1218.200 210.200H1208.300Q1206.800 210.200 1206.800 208.700V207.900"/>
  <path d="M1203 197.200H1213.600M1203 204.600H1213.600" stroke-width="2.100"/>
  <path d="M1213.200 193.900L1217.600 197.200L1213.200 200.500ZM1213.200 201.300L1217.600 204.600L1213.200 207.900Z" fill="#333" stroke="none"/>
 </g>
 <!-- eliminar (toolbar) -->
 <g stroke="#333" stroke-width="2.200" stroke-linecap="round">
  <path d="M1303.500 193.500V192.300Q1303.500 190.800 1302 190.800H1292.100Q1290.600 190.800 1290.600 192.300V208.700Q1290.600 210.200 1292.100 210.200H1302Q1303.500 210.200 1303.500 208.700V207.900"/>
  <path d="M1300.100 197.400H1310.400M1300.100 204.400H1310.400" stroke-width="2.100"/>
  <path d="M1310 194.200L1314.300 197.400L1310 200.600ZM1310 201.200L1314.300 204.400L1310 207.600Z" fill="#333" stroke="none"/>
 </g>

 <!-- bottom: agregar -->
 <g stroke="#333" stroke-width="2.1" stroke-linecap="butt">
  <path d="M26.600 654.800V645.400Q26.600 643.100 24.300 643.100H13.500Q11.200 643.100 11.200 645.400V659.700Q11.200 662 13.500 662H20"/>
  <path d="M22 661.400H30.800M26.400 657.200V665.800" stroke-width="1.900"/>
 </g>
 <!-- bottom: editar -->
 <g stroke="#333" stroke-width="2.100" stroke-linecap="butt">
  <path d="M130 652V645.600Q130 643.300 127.700 643.300H116.700Q114.400 643.300 114.400 645.600V660.300Q114.400 662.600 116.700 662.600H120.800"/>
  <path d="M124.600 662.400L133.200 654.900" stroke-width="3.200"/>
 </g>
 <!-- bottom: buscar -->
 <g stroke="#333" stroke-width="2.100" stroke-linecap="butt">
  <path d="M233.600 652V645.600Q233.600 643.300 231.300 643.300H220.600Q218.300 643.300 218.300 645.600V659.700Q218.300 662 220.600 662H224"/>
  <circle cx="230.300" cy="658.100" r="4" stroke-width="1.900"/>
  <path d="M233.300 661.100L237.600 665.200" stroke-width="2" stroke-linecap="round"/>
 </g>
 <!-- bottom: trash -->
 <g stroke="#333" stroke-width="1.500">
  <path d="M327.900 646.400V644.800Q327.900 643.500 329.200 643.500H333Q334.300 643.500 334.300 644.800V646.400"/>
  <rect x="322.400" y="646.600" width="17.300" height="2.500" rx="1.100"/>
  <path d="M325.100 649.600V660.800Q325.100 662.400 326.700 662.400H335.500Q337.100 662.400 337.100 660.800V649.600"/>
  <path d="M328 652V660M331.100 652V660M334.200 652V660" stroke-width="1.700" stroke-linecap="butt"/>
 </g>
 <!-- bottom: printer -->
 <g stroke="#444" stroke-width="1.500">
  <path d="M428.700 648.600V643.600H440V648.600"/>
  <path d="M428.400 659.200H427.200Q424.800 659.200 424.800 656.800V651Q424.800 648.600 427.200 648.600H441.400Q443.800 648.600 443.800 651V656.800Q443.800 659.200 441.400 659.200H440.400"/>
  <rect x="428.400" y="655.400" width="12" height="7.100" rx="0.800" fill="#fff"/>
  <path d="M429.600 657.900H439.200M429.600 660H439.200" stroke="#8a8a8a" stroke-width="0.900"/>
  <circle cx="441" cy="651.300" r="0.700" fill="#444" stroke-width="0.600"/>
 </g>
 <!-- double chevron -->
 <path d="M519 653.200L528.200 645.600L537.400 653.200M519 660.400L528.200 652.800L537.400 660.400" stroke="#333" stroke-width="2" stroke-linecap="butt" stroke-linejoin="miter"/>
 <!-- check / x -->
 <path d="M600.600 653.800L606.400 659L616.400 646.800" stroke="#555" stroke-width="2" stroke-linecap="butt" stroke-linejoin="miter"/>
 <path d="M705.600 646L720.600 660.600M720.600 646L705.600 660.600" stroke="#555" stroke-width="2" stroke-linecap="butt"/>
 <text x="993.600" y="206" text-anchor="middle" font-family="Liberation Sans, sans-serif" font-weight="bold" font-size="13.500" fill="#333" stroke="#333" stroke-width="0.450" textLength="10.400" lengthAdjust="spacingAndGlyphs">%</text>
 <text x="1068.900" y="205.400" text-anchor="middle" font-family="Liberation Sans, sans-serif" font-size="14" fill="#333" stroke="#333" stroke-width="0.400">$</text>
</svg>

<!-- annotation -->
<div style="left:298px;top:35px;width:158px;height:34px;border:2px solid #c00000;box-shadow:4px 4px 5px rgba(0,0,0,0.35), inset 4px 4px 4px rgba(0,0,0,0.300)"></div>
<svg style="left:440px;top:15px;filter:drop-shadow(3px 3px 2.500px rgba(0,0,0,0.4))" width="140" height="70" viewBox="440 15 140 70">
 <path d="M471 46.600H516" stroke="#c00000" stroke-width="3" fill="none"/>
 <path d="M457.500 46.600L472.500 39.400V53.800Z" fill="#c00000"/>
 <rect x="515.500" y="24.500" width="48" height="43" fill="#fff" stroke="#c00000" stroke-width="3"/>
 <text x="538" y="52.300" text-anchor="middle" font-family="Liberation Sans, sans-serif" font-weight="bold" font-size="19.500" fill="#111">1</text>
</svg>

</div>
</body></html>
